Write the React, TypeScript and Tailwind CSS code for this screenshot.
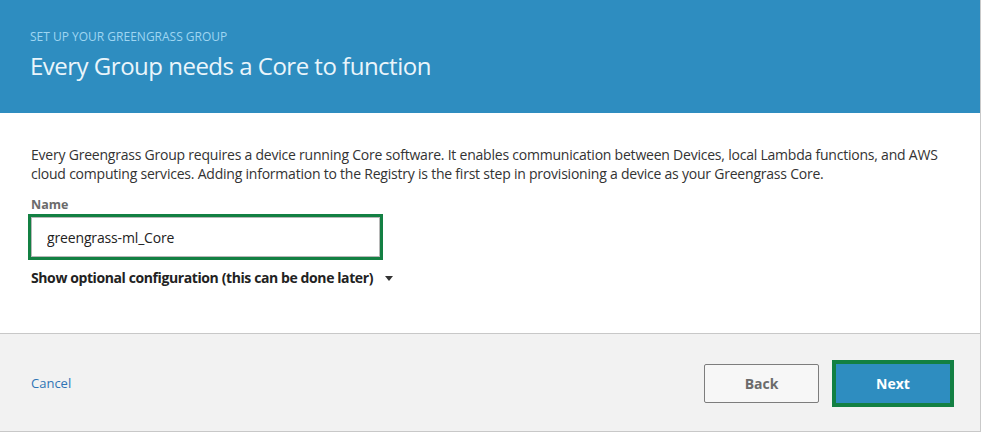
import React from 'react';

export default function App() {
    return (
        <div className="w-[981px] h-[436px] bg-white" style={{ fontFamily: '"Open Sans", "Noto Sans", sans-serif' }}>
            <div className="w-[981px] border-r border-[#c9c9c9]">
                <div className="h-[113px] bg-[#2e8dc0] px-[30px] pt-[29px]">
                    <div className="text-[12px] leading-[15px] text-[#9fd6f2] uppercase">Set up your Greengrass group</div>
                    <h1 className="mt-[7px] text-[24px] leading-[30px] tracking-[-0.5px] text-[#eaf5fb]">Every Group needs a Core to function</h1>
                </div>

                <div className="h-[220px] px-[31px] pt-[32px]">
                    <p className="text-[14px] leading-[19px] tracking-[-0.22px] text-[#333]">
                        Every Greengrass Group requires a device running Core software. It enables communication between Devices, local Lambda functions, and AWS cloud computing services. Adding information to the Registry is the first step in provisioning a device as your Greengrass Core.
                    </p>
                    <label htmlFor="core-name" className="block mt-[14px] text-[12.5px] leading-[16px] font-bold text-[#6b6b6b]">Name</label>
                    <div className="mt-[1px] -ml-[3px] w-[355px] h-[46px] border-[3px] border-[#138043]">
                        <input
                            id="core-name"
                            type="text"
                            defaultValue="greengrass-ml_Core"
                            className="w-full h-full border border-[#b8b8b8] bg-white px-[15px] text-[14px] tracking-[-0.15px] text-[#222] outline-none"
                        />
                    </div>
                    <button className="mt-[9px] flex items-center gap-[12px] text-[14px] leading-[18px] tracking-[-0.4px] font-bold text-[#222]">
                        Show optional configuration (this can be done later)
                        <svg width="8" height="5" viewBox="0 0 8 5"><path d="M0 0h8L4 5z" fill="#333" /></svg>
                    </button>
                </div>

                <div className="h-[99px] bg-[#f2f2f2] border-t border-[#c8c8c8] border-b pt-[2px] flex items-center justify-between pl-[31px] pr-[26px]">
                    <a href="#" className="text-[13px] text-[#2f74b5]">Cancel</a>
                    <div className="flex items-center gap-[13px]">
                        <button className="w-[115px] h-[39px] border border-[#7d7d7d] rounded-[2px] bg-[#f7f7f7] text-[14px] font-bold text-[#6b6b6b]">Back</button>
                        <button className="w-[122px] h-[47px] border-[4px] border-[#138043] bg-[#2e8dc0] text-[14px] font-bold text-white">Next</button>
                    </div>
                </div>
            </div>
        </div>
    );
}
